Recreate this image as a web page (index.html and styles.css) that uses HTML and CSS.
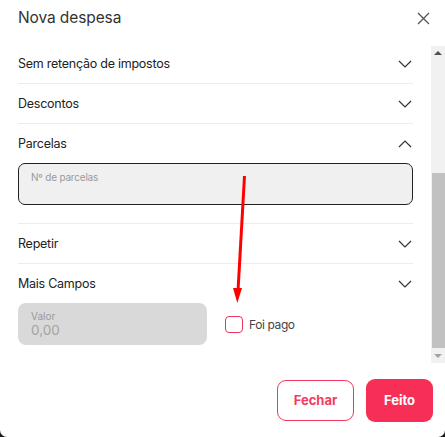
FILE: index.html
```html
<!DOCTYPE html>
<html lang="pt">
<head>
<meta charset="utf-8">
<title>Nova despesa</title>
<link rel="stylesheet" href="styles.css">
</head>
<body>
<div class="modal">
  <header class="header">
    <h1 class="title">Nova despesa</h1>
    <button class="close" aria-label="Fechar">
      <svg width="13" height="13" viewBox="0 0 13 13"><path d="M1 1L12 12M12 1L1 12" stroke="#555" stroke-width="1.3" fill="none"/></svg>
    </button>
  </header>
  <div class="scroll">
    <div class="content">
      <section class="section first">
        <div class="row"><span class="label">Sem retenção de impostos</span><svg class="chev" width="14" height="8" viewBox="0 0 14 8"><path d="M1 1L7 7L13 1" stroke="#333" stroke-width="1.2" fill="none"/></svg></div>
      </section>
      <section class="section">
        <div class="row"><span class="label">Descontos</span><svg class="chev" width="14" height="8" viewBox="0 0 14 8"><path d="M1 1L7 7L13 1" stroke="#333" stroke-width="1.2" fill="none"/></svg></div>
      </section>
      <section class="section open">
        <div class="row"><span class="label">Parcelas</span><svg class="chev" width="14" height="8" viewBox="0 0 14 8"><path d="M1 7L7 1L13 7" stroke="#333" stroke-width="1.2" fill="none"/></svg></div>
        <div class="input"><span class="placeholder">Nº de parcelas</span></div>
      </section>
      <section class="section">
        <div class="row"><span class="label">Repetir</span><svg class="chev" width="14" height="8" viewBox="0 0 14 8"><path d="M1 1L7 7L13 1" stroke="#333" stroke-width="1.2" fill="none"/></svg></div>
      </section>
      <section class="section last">
        <div class="row"><span class="label">Mais Campos</span><svg class="chev" width="14" height="8" viewBox="0 0 14 8"><path d="M1 1L7 7L13 1" stroke="#333" stroke-width="1.2" fill="none"/></svg></div>
        <div class="fields">
          <div class="valor"><span class="valor-label">Valor</span><span class="valor-value">0,00</span></div>
          <label class="check"><span class="box"></span><span class="check-label">Foi pago</span></label>
        </div>
      </section>
    </div>
    <div class="scrollbar">
      <div class="sb-btn"><span class="tri up"></span></div>
      <div class="sb-track"><div class="sb-thumb"></div></div>
      <div class="sb-btn"><span class="tri down"></span></div>
    </div>
  </div>
  <footer class="footer">
    <button class="btn outline">Fechar</button>
    <button class="btn solid">Feito</button>
  </footer>
  <svg class="annot" width="445" height="437" viewBox="0 0 445 437">
    <line x1="244.5" y1="176" x2="238" y2="291" stroke="#ff0000" stroke-width="3"/>
    <polygon points="233,288 242,288 237.3,303" fill="#ff0000"/>
  </svg>
</div>
</body>
</html>
```

FILE: styles.css
```css
* { box-sizing: border-box; }
html, body { margin: 0; padding: 0; }
body {
  background: #1a1a1a;
  font-family: "Inter", "Noto Sans", sans-serif;
  width: 445px;
  height: 437px;
  overflow: hidden;
}
.modal {
  position: relative;
  width: 445px;
  height: 437px;
  background: #fff;
  border-radius: 0 0 7px 7px;
  display: flex;
  flex-direction: column;
}
.header {
  height: 46px;
  display: flex;
  align-items: flex-start;
  justify-content: space-between;
  padding: 8px 15px 0 18px;
}
.title {
  margin: 0;
  font-size: 15.5px;
  line-height: 20px;
  font-weight: 400;
  color: #333;
  letter-spacing: -0.1px;
}
.close {
  border: 0;
  background: none;
  padding: 0;
  margin-top: 4px;
  width: 13px;
  height: 13px;
  display: block;
}
.close svg { display: block; }
.scroll {
  height: 317px;
  display: flex;
}
.content {
  flex: 1;
  overflow: hidden;
  padding: 0 18px;
}
.section {
  border-bottom: 1px solid #ececec;
}
.section.first { margin-top: -2px; }
.section.open { padding-bottom: 18px; }
.section.last { border-bottom: 0; }
.row {
  height: 39px;
  display: flex;
  align-items: center;
  justify-content: space-between;
  padding-right: 1px;
}
.label {
  font-size: 12.5px;
  color: #222;
  letter-spacing: -0.25px;
}
.chev { display: block; }
.input {
  height: 42px;
  border: 1px solid #222;
  border-radius: 7px;
  background: #f0f0f0;
  padding: 7px 12px;
}
.placeholder {
  font-size: 10px;
  letter-spacing: -0.2px;
  color: #9a9a9a;
  display: block;
}
.fields {
  display: flex;
  align-items: center;
  gap: 18px;
}
.valor {
  width: 189px;
  height: 42px;
  background: #d9d9d9;
  border-radius: 8px;
  padding: 7px 13px;
  display: flex;
  flex-direction: column;
}
.valor-label {
  font-size: 10px;
  color: #999;
  line-height: 12px;
}
.valor-value {
  font-size: 13.5px;
  color: #a3a3a3;
  line-height: 17px;
}
.check {
  display: flex;
  align-items: center;
  gap: 6px;
}
.box {
  width: 18px;
  height: 17px;
  border: 1.5px solid #e8365a;
  border-radius: 4px;
  background: #fff;
}
.check-label {
  font-size: 12px;
  letter-spacing: -0.4px;
  color: #444;
}
.scrollbar {
  width: 14px;
  background: #f1f1f1;
  display: flex;
  flex-direction: column;
}
.sb-btn {
  height: 14px;
  display: flex;
  align-items: center;
  justify-content: center;
}
.tri {
  width: 0;
  height: 0;
  border-left: 4px solid transparent;
  border-right: 4px solid transparent;
}
.tri.up { border-bottom: 4px solid #505050; }
.tri.down { border-top: 4px solid #a3a3a3; }
.sb-track {
  flex: 1;
  padding-top: 113px;
}
.sb-thumb {
  height: 175px;
  background: #c1c1c1;
  margin: 0 0 0 1px;
}
.footer {
  flex: 1;
  display: flex;
  align-items: center;
  justify-content: flex-end;
  gap: 12px;
  padding: 0 12px 0 0;
}
.btn {
  font-family: "Inter", "Noto Sans", sans-serif;
  font-size: 13px;
  font-weight: 700;
  border-radius: 9px;
  cursor: pointer;
}
.btn.outline {
  width: 77px;
  height: 41px;
  background: #fff;
  border: 1px solid #f2375c;
  color: #f23d62;
}
.btn.solid {
  width: 67px;
  height: 43px;
  background: #f72f57;
  border: 0;
  color: #fff;
}
.annot {
  position: absolute;
  left: 0;
  top: 0;
  pointer-events: none;
}
```
